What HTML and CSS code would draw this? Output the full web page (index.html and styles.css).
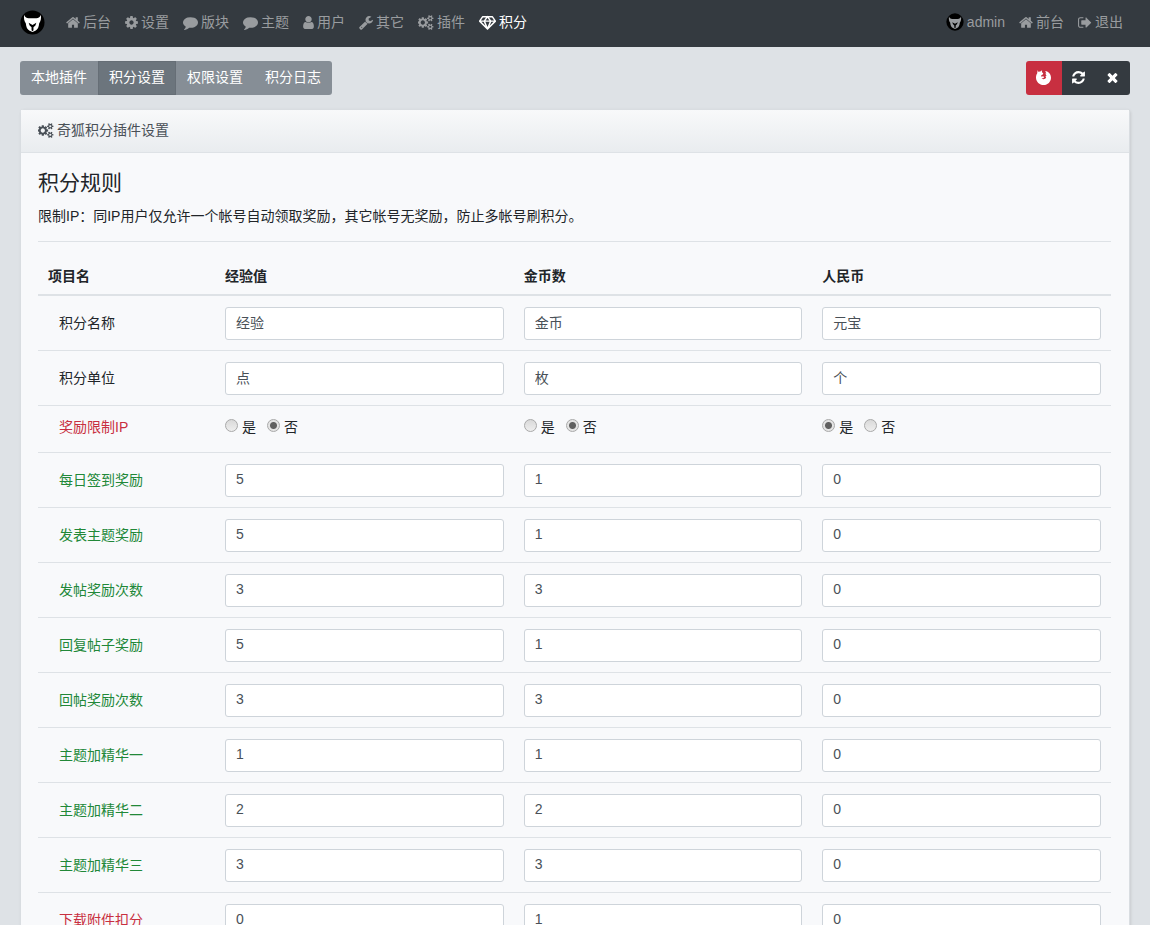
FILE: index.html
```
<!DOCTYPE html>
<html lang="zh-CN">
<head>
  <meta charset="UTF-8">
  <meta name="viewport" content="width=device-width, initial-scale=1">
  <title>积分设置</title>
  <link rel="stylesheet" href="styles.css">
</head>
<body>
  <svg class="sprite" aria-hidden="true">
    <symbol id="logo" viewBox="0 0 26 26">
      <circle cx="13" cy="13" r="12.5" fill="#000"/>
      <path fill="currentColor" d="M4.300 5C5 7.300 6.500 8.600 9 8.600h8c2.500 0 4-1.300 4.700-3.600.5 3.700 0 6.700-1.800 9-.2 3.500-1.400 6.200-3.900 7.700l-3 1.300-3-1.300c-2.500-1.500-3.700-4.200-3.900-7.700-1.800-2.300-2.300-5.300-1.800-9z"/>
      <path fill="#000" d="M9 13.300l4 2.400 4-2.400-1 2.700-2 2v3l-1 1-1-1v-3l-2-2z"/>
    </symbol>
    <symbol id="home" viewBox="64 0 1664 1792"><path d="M1472 992v480q0 26-19 45t-45 19h-384v-384h-256v384h-384q-26 0-45-19t-19-45v-480q0-1 .5-3t.5-3l575-474 575 474q1 2 1 6zm223-69l-62 74q-8 9-21 11h-3q-13 0-21-7l-692-577-692 577q-12 8-24 7-13-2-21-11l-62-74q-8-10-7-23.5t11-21.500l719-599q32-26 76-26t76 26l244 204v-195q0-14 9-23t23-9h192q14 0 23 9t9 23v408l219 182q10 8 11 21.500t-7 23.500z"/></symbol>
    <symbol id="cog" viewBox="128 0 1536 1792"><path d="M1152 896q0-106-75-181t-181-75-181 75-75 181 75 181 181 75 181-75 75-181zm512-109v222q0 12-8 23t-20 13l-185 28q-19 54-39 91 35 50 107 138 10 12 10 25t-9 23q-27 37-99 108t-94 71q-12 0-26-9l-138-108q-44 23-91 38-16 136-29 186-7 28-36 28h-222q-14 0-24.500-8.500t-11.500-21.500l-28-184q-49-16-90-37l-141 107q-10 9-25 9-14 0-25-11-126-114-165-168-7-10-7-23 0-12 8-23 15-21 51-66.500t54-70.500q-27-50-41-99l-183-27q-13-2-21-12.500t-8-23.500v-222q0-12 8-23t19-13l186-28q14-46 39-92-40-57-107-138-10-12-10-24 0-10 9-23 26-36 98.500-107.500t94.500-71.500q13 0 26 10l138 107q44-23 91-38 16-136 29-186 7-28 36-28h222q14 0 24.500 8.500t11.500 21.500l28 184q49 16 90 37l142-107q9-9 24-9 13 0 25 10 129 119 165 170 7 8 7 22 0 12-8 23-15 21-51 66.500t-54 70.500q26 50 41 98l183 28q13 2 21 12.500t8 23.500z"/></symbol>
    <symbol id="comment" viewBox="0 0 1792 1792"><path d="M1792 896q0 174-120 321.500t-326 233-450 85.500q-70 0-145-8-198 175-460 242-49 14-114 22-17 2-30.500-9t-17.500-29v-1q-3-4-.5-12t2-10 4.500-9.500l6-9 7-8.500 8-9q7-8 31-34.500t34.500-38 31-39.500 32.500-51 27-59 26-76q-157-89-247.500-220t-90.500-281q0-130 71-248.500t191-204.500 286-136.500 348-50.500q244 0 450 85.500t326 233 120 321.500z"/></symbol>
    <symbol id="user" viewBox="256 0 1280 1792"><path d="M1536 1399q0 109-62.500 187t-150.500 78h-854q-88 0-150.500-78t-62.500-187q0-85 8.500-160.500t31.500-152 58.500-131 94-89 134.500-34.500q131 128 313 128t313-128q76 0 134.500 34.500t94 89 58.500 131 31.500 152 8.500 160.500zm-256-887q0 159-112.500 271.500t-271.500 112.500-271.500-112.500-112.500-271.500 112.500-271.500 271.500-112.500 271.500 112.500 112.500 271.500z"/></symbol>
    <symbol id="wrench" viewBox="64 0 1664 1792"><path d="M448 1472q0-26-19-45t-45-19-45 19-19 45 19 45 45 19 45-19 19-45zm644-420l-682 682q-37 37-90 37-52 0-91-37l-106-108q-38-36-38-90 0-53 38-91l681-681q39 98 114.500 173.500t173.500 114.500zm634-435q0 39-23 106-47 134-164.500 217.500t-258.500 83.500q-185 0-316.500-131.500t-131.500-316.500 131.500-316.500 316.500-131.500q58 0 121.500 16.500t107.500 46.500q16 11 16 28t-16 28l-293 169v224l193 107q5-3 79-48.500t135.500-81 70.500-35.500q15 0 23.500 10t8.500 25z"/></symbol>
    <symbol id="cogs" viewBox="0 0 1920 1792"><path d="M832 896q0-106-75-181t-181-75-181 75-75 181 75 181 181 75 181-75 75-181zm768 512q0-52-38-90t-90-38-90 38-38 90q0 53 37.500 90.500t90.500 37.500 90.500-37.500 37.500-90.500zm0-1024q0-52-38-90t-90-38-90 38-38 90q0 53 37.500 90.500t90.500 37.500 90.500-37.500 37.500-90.500zm-384 421v185q0 10-7 19.500t-16 10.500l-155 24q-11 35-32 76 34 48 90 115 7 11 7 20 0 12-7 19-23 30-82.500 89.500t-78.500 59.500q-11 0-21-7l-115-90q-37 19-77 31-11 108-23 155-7 24-30 24h-186q-11 0-20-7.500t-10-17.500l-23-153q-34-10-75-31l-118 89q-7 7-20 7-11 0-21-8-144-133-144-160 0-9 7-19 10-14 41-53t47-61q-23-44-35-82l-152-24q-10-1-17-9.500t-7-19.500v-185q0-10 7-19.500t16-10.500l155-24q11-35 32-76-34-48-90-115-7-11-7-20 0-12 7-20 22-30 82-89t79-59q11 0 21 7l115 90q34-18 77-32 11-108 23-154 7-24 30-24h186q11 0 20 7.500t10 17.500l23 153q34 10 75 31l118-89q8-7 20-7 11 0 21 8 144 133 144 160 0 8-7 19-12 16-42 54t-45 60q23 48 34 82l152 23q10 2 17 10.500t7 19.500zm640 533v140q0 16-149 31-12 27-30 52 51 113 51 138 0 4-4 7-122 71-124 71-8 0-46-47t-52-68q-20 2-30 2t-30-2q-14 21-52 68t-46 47q-2 0-124-71-4-3-4-7 0-25 51-138-18-25-30-52-149-15-149-31v-140q0-16 149-31 13-29 30-52-51-113-51-138 0-4 4-7 4-2 35-20t59-34 30-16q8 0 46 46.500t52 67.500q20-2 30-2t30 2q51-71 92-112l6-2q4 0 124 70 4 3 4 7 0 25-51 138 17 23 30 52 149 15 149 31zm0-1024v140q0 16-149 31-12 27-30 52 51 113 51 138 0 4-4 7-122 71-124 71-8 0-46-47t-52-68q-20 2-30 2t-30-2q-14 21-52 68t-46 47q-2 0-124-71-4-3-4-7 0-25 51-138-18-25-30-52-149-15-149-31v-140q0-16 149-31 13-29 30-52-51-113-51-138 0-4 4-7 4-2 35-20t59-34 30-16q8 0 46 46.500t52 67.500q20-2 30-2t30 2q51-71 92-112l6-2q4 0 124 70 4 3 4 7 0 25-51 138 17 23 30 52 149 15 149 31z"/></symbol>
    <symbol id="diamond" viewBox="0 0 16 14"><path fill="none" stroke="currentColor" stroke-width="1.4" stroke-linejoin="round" d="M3.500 1.500h9l2.900 4.200L8 13.200.6 5.700zM.6 5.700h14.800M8 1.500L5 5.700l3 7.500 3-7.500z"/></symbol>
    <symbol id="sign-out" viewBox="64 0 1664 1792"><path d="M704 1440q0 4 1 20t.5 26.500-3 23.500-10 19.500-20.500 6.500h-320q-119 0-203.500-84.500t-84.500-203.500v-704q0-119 84.500-203.500t203.500-84.500h320q13 0 22.500 9.500t9.500 22.500q0 4 1 20t.5 26.500-3 23.500-10 19.500-20.500 6.500h-320q-66 0-113 47t-47 113v704q0 66 47 113t113 47h312l11.500 1 11.500 3 8 5.500 7 9 2 13.500zm928-544q0 26-19 45l-544 544q-19 19-45 19t-45-19-19-45v-288h-448q-26 0-45-19t-19-45v-384q0-26 19-45t45-19h448v-288q0-26 19-45t45-19 45 19 19 45l544 544q19 19 19 45z"/></symbol>
    <symbol id="firefox" viewBox="0 0 14 14"><path d="M1.500 0l.6 1.600L4 1.500 5.700.2l-.2 1.900 1.300 1-.5 1.200-1.400.6.100 1.400 1.600-.4 1 .6-.6 1-1.800.5c1.600 1.200 3.900.5 4.300-1.200L8.700 5.600l1.200-.3-1.300-2 1-.1L8.600.9C11.900 1.300 14 4 14 7.200c0 3.800-3.100 6.800-6.900 6.800S0 11 0 7.200c0-1.700.4-3 1.100-4z"/></symbol>
    <symbol id="refresh" viewBox="128 0 1536 1792"><path d="M1639 1056q0 5-1 7-64 268-268 434.500t-478 166.500q-146 0-282.500-55t-243.500-157l-129 129q-19 19-45 19t-45-19-19-45v-448q0-26 19-45t45-19h448q26 0 45 19t19 45-19 45l-137 137q71 66 161 102t187 36q134 0 250-65t186-179q11-17 53-117 8-23 30-23h192q13 0 22.500 9.500t9.500 22.500zm25-800v448q0 26-19 45t-45 19h-448q-26 0-45-19t-19-45 19-45l138-138q-148-137-349-137-134 0-250 65t-186 179q-11 17-53 117-8 23-30 23h-199q-13 0-22.500-9.500t-9.500-22.500v-7q65-268 270-434.500t480-166.500q146 0 284 55.500t245 156.500l130-129q19-19 45-19t45 19 19 45z"/></symbol>
    <symbol id="times" viewBox="192 0 1408 1792"><path d="M1490 1322q0 40-28 68l-136 136q-28 28-68 28t-68-28l-294-294-294 294q-28 28-68 28t-68-28l-136-136q-28-28-28-68t28-68l294-294-294-294q-28-28-28-68t28-68l136-136q28-28 68-28t68 28l294 294 294-294q28-28 68-28t68 28l136 136q28 28 28 68t-28 68l-294 294 294 294q28 28 28 68z"/></symbol>
  </svg>

  <header class="navbar">
    <a class="brand" href="#" aria-label="后台首页"><svg class="logo"><use href="#logo"/></svg></a>
    <nav class="nav nav-main">
      <a href="#"><svg class="icon w14"><use href="#home"/></svg>后台</a>
      <a href="#"><svg class="icon w13"><use href="#cog"/></svg>设置</a>
      <a href="#"><svg class="icon"><use href="#comment"/></svg>版块</a>
      <a href="#"><svg class="icon"><use href="#comment"/></svg>主题</a>
      <a href="#"><svg class="icon w11"><use href="#user"/></svg>用户</a>
      <a href="#"><svg class="icon w14"><use href="#wrench"/></svg>其它</a>
      <a href="#"><svg class="icon w16"><use href="#cogs"/></svg>插件</a>
      <a href="#" class="active"><svg class="icon w17"><use href="#diamond"/></svg>积分</a>
    </nav>
    <nav class="nav">
      <a href="#"><svg class="avatar"><use href="#logo"/></svg>admin</a>
      <a href="#"><svg class="icon w14"><use href="#home"/></svg>前台</a>
      <a href="#"><svg class="icon w14"><use href="#sign-out"/></svg>退出</a>
    </nav>
  </header>

  <main class="container">
    <div class="toolbar">
      <div class="tabs">
        <a href="#">本地插件</a>
        <a href="#" class="active">积分设置</a>
        <a href="#">权限设置</a>
        <a href="#">积分日志</a>
      </div>
      <div class="tools">
        <button type="button" class="danger" aria-label="浏览器"><svg class="icon"><use href="#firefox"/></svg></button>
        <button type="button" aria-label="刷新"><svg class="icon w13"><use href="#refresh"/></svg></button>
        <button type="button" aria-label="关闭"><svg class="icon w13"><use href="#times"/></svg></button>
      </div>
    </div>

    <section class="card">
      <div class="card-header"><svg class="icon w16"><use href="#cogs"/></svg>奇狐积分插件设置</div>
      <form class="card-body">
        <h4>积分规则</h4>
        <p>限制IP：同IP用户仅允许一个帐号自动领取奖励，其它帐号无奖励，防止多帐号刷积分。</p>
        <hr>
        <table class="table">
          <thead>
            <tr><th class="name">项目名</th><th id="c1">经验值</th><th id="c2">金币数</th><th id="c3">人民币</th></tr>
          </thead>
          <tbody id="rules"></tbody>
        </table>
      </form>
    </section>
  </main>

  <script src="script.js"></script>
</body>
</html>
```
FILE: styles.css
```
* {
  box-sizing: border-box;
}
body {
  margin: 0;
  background: #dee2e6;
  color: #212529;
  font: 14px/21px "Liberation Sans", "Noto Sans CJK SC", sans-serif;
}
a {
  color: inherit;
  text-decoration: none;
}
.sprite {
  display: none;
}
.icon {
  width: 15px;
  height: 15px;
  fill: currentColor;
  flex: none;
}
.w11 { width: 11px; }
.w13 { width: 13px; }
.w14 { width: 14px; }
.w16 { width: 16px; }
.w17 { width: 17px; }

/* top bar */
.navbar {
  display: flex;
  align-items: center;
  height: 47px;
  padding: 0 27px 3px 20px;
  background: #343a40;
}
.brand {
  display: flex;
  padding-top: 1px;
  margin-right: 21px;
}
.logo {
  width: 25px;
  height: 25px;
  color: #fff;
}
.avatar {
  width: 18px;
  height: 18px;
}
.nav {
  display: flex;
  gap: 14px;
  color: #999c9f;
}
.nav a {
  display: flex;
  align-items: center;
  gap: 3px;
}
.nav .active {
  color: #fff;
}
.nav-main {
  flex: 1;
}

.container {
  padding: 14px 20px;
}
.toolbar {
  display: flex;
  justify-content: space-between;
  margin-bottom: 14px;
}
.tabs,
.tools {
  display: flex;
  height: 34px;
  border-radius: 3px;
  overflow: hidden;
  color: #fff;
}
.tabs {
  background: #868e96;
}
.tabs a {
  padding: 6px 11px;
}
.tabs .active {
  background: #6c757d;
  border: 1px solid #666e76;
  padding: 5px 10px;
}
.tools button {
  display: flex;
  align-items: center;
  justify-content: center;
  width: 34px;
  padding: 0 1px 2px 0;
  border: 0;
  background: #343a40;
  color: #fff;
}
.tools .danger {
  width: 36px;
  background: #c82f40;
}

/* settings card */
.card {
  border: 1px solid #d9dde1;
  border-radius: 4px;
  background: #f8f9fb;
  box-shadow: 1px 1px 3px rgba(0, 0, 0, 0.1);
}
.card-header {
  display: flex;
  align-items: center;
  gap: 3px;
  height: 43px;
  padding: 0 17px 2px;
  border-bottom: 1px solid #dee2e6;
  background: linear-gradient(#f8f9fa, #e9ecef);
  color: #495057;
}
.card-body {
  padding: 17px 18px 17px 17px;
}
h4 {
  margin: 0 0 11px;
  font-size: 21px;
  font-weight: 400;
  line-height: 25px;
}
p {
  margin: 0 0 14px;
}
hr {
  margin: 0 0 14px;
  border: 0;
  border-top: 1px solid #dee2e6;
}

.table {
  width: 100%;
  table-layout: fixed;
  border-spacing: 0;
}
.table th,
.table td {
  padding: 10px;
  text-align: left;
}
.table th {
  padding-bottom: 7px;
  border-bottom: 2px solid #dee2e6;
  font-weight: 700;
}
.table .name {
  width: 177px;
}
.table td {
  height: 55px;
  border-bottom: 1px solid #dee2e6;
}
.table td:first-child {
  padding-left: 21px;
}
.table .radios td {
  height: 47px;
  padding: 11px 10px 14px;
  vertical-align: top;
}
.table .radios td:first-child {
  padding-left: 21px;
}
.green { color: #218838; }
.red { color: #c82f40; }

.table input[type="text"] {
  display: block;
  width: 100%;
  height: 33px;
  padding: 0 10px 2px;
  border: 1px solid #ced4da;
  border-radius: 3px;
  background: #fff;
  color: #495057;
  font: inherit;
}
.options {
  display: flex;
  gap: 11px;
}
.options label {
  display: flex;
  gap: 4px;
}
.options input {
  appearance: none;
  width: 13px;
  height: 13px;
  margin: 2px 0 0;
  border: 1px solid #a9a9a9;
  border-radius: 50%;
  background: linear-gradient(#d9d9d9, #eee);
}
.options input:checked {
  background: radial-gradient(circle, #606060 3px, #e4e4e4 4px);
}
```
FILE: script.js
```
const rules = [
  { label: "积分名称", values: ["经验", "金币", "元宝"] },
  { label: "积分单位", values: ["点", "枚", "个"] },
  { label: "奖励限制IP", color: "red", radios: [0, 0, 1] },
  { label: "每日签到奖励", color: "green", values: [5, 1, 0] },
  { label: "发表主题奖励", color: "green", values: [5, 1, 0] },
  { label: "发帖奖励次数", color: "green", values: [3, 3, 0] },
  { label: "回复帖子奖励", color: "green", values: [5, 1, 0] },
  { label: "回帖奖励次数", color: "green", values: [3, 3, 0] },
  { label: "主题加精华一", color: "green", values: [1, 1, 0] },
  { label: "主题加精华二", color: "green", values: [2, 2, 0] },
  { label: "主题加精华三", color: "green", values: [3, 3, 0] },
  { label: "下载附件扣分", color: "red", values: [0, 1, 0] }
];

function radioCell(row, col, yes) {
  const name = `limit_${row}_${col}`;
  return `<td><div class="options">
    <label><input type="radio" name="${name}" value="1" ${yes ? "checked" : ""}>是</label>
    <label><input type="radio" name="${name}" value="0" ${yes ? "" : "checked"}>否</label>
  </div></td>`;
}

function textCell(row, col, value) {
  return `<td><input type="text" name="rule_${row}_${col}" value="${value}" aria-labelledby="r${row} c${col + 1}"></td>`;
}

document.getElementById("rules").innerHTML = rules.map((rule, i) => {
  const cells = rule.radios
    ? rule.radios.map((yes, j) => radioCell(i, j, yes))
    : rule.values.map((value, j) => textCell(i, j, value));
  return `<tr class="${rule.radios ? "radios" : ""}">
    <td id="r${i}" class="${rule.color || ""}">${rule.label}</td>${cells.join("")}
  </tr>`;
}).join("");
```
